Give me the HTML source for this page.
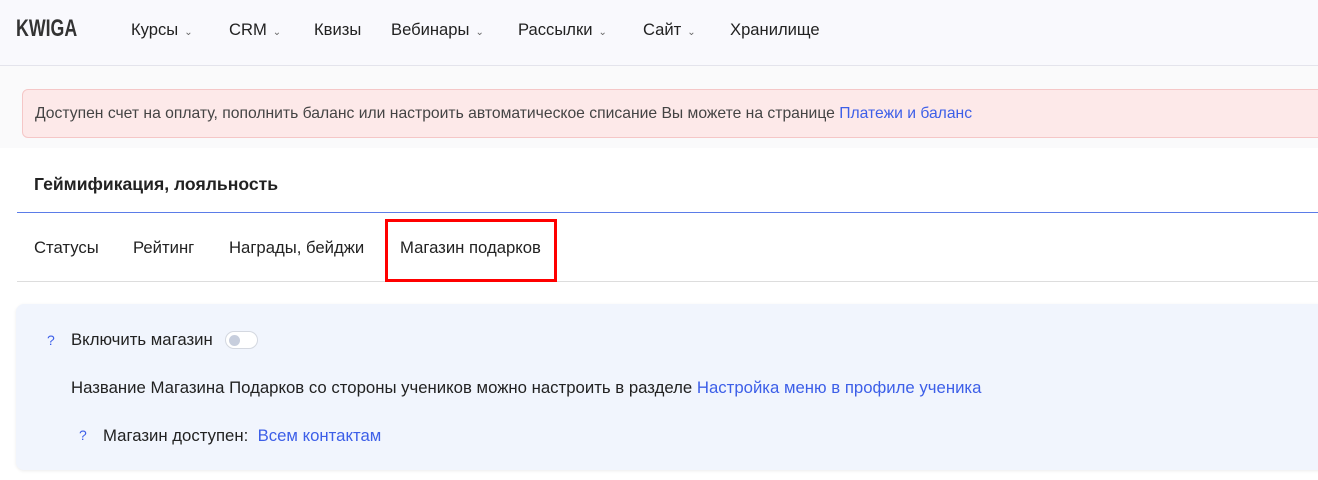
<!DOCTYPE html>
<html><head><meta charset="utf-8"><style>
*{margin:0;padding:0;box-sizing:border-box}
body{width:1318px;height:480px;overflow:hidden;background:#fff;font-family:"Liberation Sans",sans-serif;color:#222;position:relative}
.hdr{position:absolute;left:0;top:0;width:1318px;height:66px;background:#f9f9fd;border-bottom:1px solid #e4e4ec}
.logo{position:absolute;left:16px;top:15px;font-weight:bold;font-size:24px;color:#333;transform:scaleX(0.74);transform-origin:left}
.nav{position:absolute;top:20px;font-size:16.6px;color:#222}
.nav span.c{font-size:10px;color:#666;margin-left:6px}
.gray{position:absolute;left:0;top:66px;width:1318px;height:82px;background:#fafafb}
.alert{position:absolute;left:22px;top:89px;width:1310px;height:49px;background:#fde9e9;border:1px solid #f5c7c7;border-radius:6px;font-size:15.7px;color:#444;padding:15px 0 0 12px}
a{color:#3d5fe8;text-decoration:none}
.title{position:absolute;left:34px;top:174px;font-size:17.6px;font-weight:bold;color:#222}
.bl{position:absolute;left:17px;top:212px;width:1301px;height:1px;background:#5b7ce8}
.tab{position:absolute;top:238px;font-size:16.7px;color:#222}
.tl{position:absolute;left:17px;top:281px;width:1301px;height:1px;background:#ddd}
.red{position:absolute;left:385px;top:219px;width:172px;height:63px;border:3px solid #f00}
.panel{position:absolute;left:16px;top:304px;width:1320px;height:166px;background:#f1f5fd;border-radius:8px;box-shadow:0 1px 3px rgba(0,0,0,0.08)}
.t{position:absolute;font-size:16.75px;color:#222}
.q{position:absolute;font-size:14px;color:#3d5fe8}
.tog{position:absolute;left:225px;top:331px;width:33px;height:18px;border:1px solid #d4d8e0;border-radius:9px;background:#fff}
.tog:after{content:"";position:absolute;left:3px;top:3px;width:11px;height:11px;border-radius:50%;background:#c7cedd}
</style></head><body>
<div class="hdr">
<div class="logo">KWIGA</div>
<div class="nav" style="left:131px">Курсы<span class="c">⌄</span></div>
<div class="nav" style="left:229px">CRM<span class="c">⌄</span></div>
<div class="nav" style="left:314px">Квизы</div>
<div class="nav" style="left:391px">Вебинары<span class="c">⌄</span></div>
<div class="nav" style="left:518px">Рассылки<span class="c">⌄</span></div>
<div class="nav" style="left:643px">Сайт<span class="c">⌄</span></div>
<div class="nav" style="left:730px">Хранилище</div>
</div>
<div class="gray"></div>
<div class="alert">Доступен счет на оплату, пополнить баланс или настроить автоматическое списание Вы можете на странице <a>Платежи и баланс</a></div>
<div class="title">Геймификация, лояльность</div>
<div class="bl"></div>
<div class="tab" style="left:34px">Статусы</div>
<div class="tab" style="left:133px">Рейтинг</div>
<div class="tab" style="left:229px">Награды, бейджи</div>
<div class="tab" style="left:400px">Магазин подарков</div>
<div class="tl"></div>
<div class="red"></div>
<div class="panel"></div>
<div class="q" style="left:47px;top:332px">?</div>
<div class="t" style="left:71px;top:330px">Включить магазин</div>
<div class="tog"></div>
<div class="t" style="left:71px;top:378px">Название Магазина Подарков со стороны учеников можно настроить в разделе <a>Настройка меню в профиле ученика</a></div>
<div class="q" style="left:79px;top:427px">?</div>
<div class="t" style="left:103px;top:426px">Магазин доступен:&nbsp; <a>Всем контактам</a></div>
</body></html>
